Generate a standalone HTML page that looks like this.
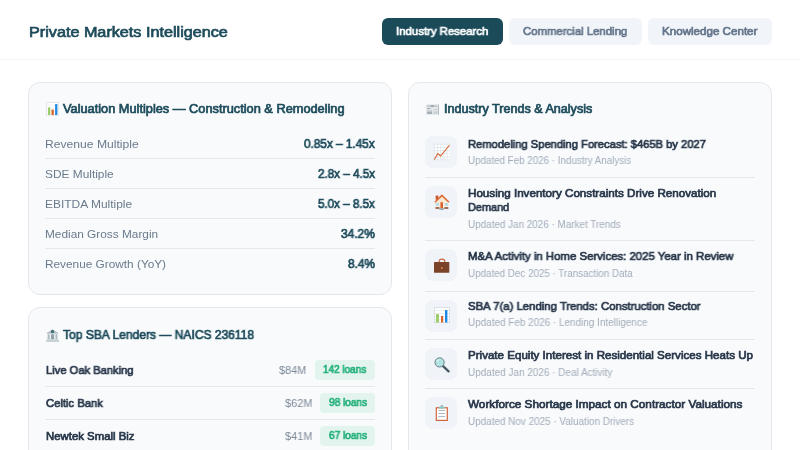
<!DOCTYPE html>
<html><head><meta charset="utf-8">
<style>
*{box-sizing:border-box;margin:0;padding:0}
html,body{width:800px;height:450px;overflow:hidden;background:#ffffff}
body{font-family:"Liberation Sans",sans-serif;position:relative}
.hdr{position:absolute;left:0;top:0;width:800px;height:60px;border-bottom:1px solid #f1f5f9;background:#fff}
.nav{position:absolute;top:18px;height:27px;border-radius:6px;background:#f1f5f9}
.nav.on{background:#1b4a59}
.card{position:absolute;background:#f8fafc;border:1px solid #e5e7eb;border-radius:12px}
.ln{position:absolute;height:1px;background:#e5e7eb}
.badge{position:absolute;height:20px;border-radius:4px;background:#e3f4ee}
.ic{position:absolute;left:425px;width:32px;height:32px;border-radius:8px;background:#f0f3f7}
.t{position:absolute;white-space:nowrap;transform-origin:0 0;will-change:transform}
svg{position:absolute;overflow:visible}
</style></head>
<body>
<div class="hdr"></div>
<div class="nav on" style="left:382px;width:121px"></div>
<div class="nav" style="left:509px;width:133px"></div>
<div class="nav" style="left:648px;width:124px"></div>
<div class="card" style="left:28px;top:82px;width:364px;height:213px"></div>
<div class="card" style="left:28px;top:307px;width:364px;height:200px"></div>
<div class="card" style="left:408px;top:82px;width:364px;height:420px"></div>
<div class="ln" style="left:45px;top:158px;width:330px"></div>
<div class="ln" style="left:45px;top:188px;width:330px"></div>
<div class="ln" style="left:45px;top:218px;width:330px"></div>
<div class="ln" style="left:45px;top:248px;width:330px"></div>
<div class="ln" style="left:45px;top:386px;width:330px"></div>
<div class="ln" style="left:45px;top:419px;width:330px"></div>
<div class="ln" style="left:425px;top:177px;width:330px"></div>
<div class="ln" style="left:425px;top:240px;width:330px"></div>
<div class="ln" style="left:425px;top:291px;width:330px"></div>
<div class="ln" style="left:425px;top:339px;width:330px"></div>
<div class="ln" style="left:425px;top:388px;width:330px"></div>
<div class="badge" style="left:315px;top:360px;width:60px"></div>
<div class="badge" style="left:320px;top:393px;width:55px"></div>
<div class="badge" style="left:320px;top:426px;width:55px"></div>
<div class="ic" style="top:136px"></div>
<div class="ic" style="top:186px"></div>
<div class="ic" style="top:249px"></div>
<div class="ic" style="top:300px"></div>
<div class="ic" style="top:348px"></div>
<div class="ic" style="top:397px"></div>
<svg style="left:46px;top:102px" width="13" height="13.5" viewBox="0 0 16 16.5"><rect x="0.5" y="0.5" width="15" height="15.5" fill="#fff" stroke="#dde3e7"/><path d="M1 4H15M1 7.5H15M1 11H15" stroke="#e6eaed" stroke-width="0.8"/><rect x="2.5" y="6.5" width="2.8" height="9.5" fill="#9ccc65"/><rect x="6.8" y="9.2" width="2.8" height="6.8" fill="#d9622f"/><rect x="11.2" y="2.5" width="2.8" height="13.5" fill="#1e88e5"/></svg>
<svg style="left:46px;top:329px" width="13" height="13" viewBox="0 0 16 16"><path d="M8 0.5L15.5 5H0.5Z" fill="#b4c1c7"/><ellipse cx="8" cy="3.6" rx="2" ry="2.6" fill="#3f6f76"/><rect x="1" y="5" width="14" height="1.3" fill="#c5d0d5"/><rect x="2" y="6.6" width="2.4" height="6" fill="#aab8be"/><rect x="6" y="6.6" width="4" height="6" fill="#8fa2aa"/><rect x="11.6" y="6.6" width="2.4" height="6" fill="#aab8be"/><rect x="1" y="12.6" width="14" height="1.4" fill="#c5d0d5"/><rect x="0" y="14" width="16" height="1.6" fill="#b4c1c7"/></svg>
<svg style="left:426px;top:103.5px" width="13" height="11" viewBox="0 0 16 13"><rect x="0" y="0" width="16" height="13" rx="0.6" fill="#e3e7ea"/><rect x="15" y="0.5" width="1" height="12.5" fill="#a9b2b9"/><rect x="1.5" y="1.5" width="12.5" height="1.6" fill="#b5bdc3"/><rect x="6" y="1.2" width="3.5" height="2.2" fill="#98a3ab"/><rect x="1.5" y="4.8" width="4" height="1.2" fill="#9aa4ac"/><rect x="9.5" y="6" width="4.5" height="1" fill="#c2c9ce"/><rect x="1.5" y="7.5" width="6" height="1" fill="#c2c9ce"/><rect x="1.5" y="9" width="6" height="3" fill="#a3adb4"/><rect x="9.5" y="8.5" width="4.5" height="3.5" fill="#c9d0d4"/></svg>
<svg style="left:434px;top:144px" width="16" height="16" viewBox="0 0 16 16"><rect x="0" y="0" width="16" height="16" fill="#fff"/><path d="M0.3 0V16M3.5 0V16M6.7 0V16M9.9 0V16M13.1 0V16M0 0.3H16M0 3.5H16M0 6.7H16M0 9.9H16M0 13.1H16M0 15.7H16" stroke="#d5dde2" stroke-width="0.6"/><path d="M0.4 15.5L3.8 9.6L6.6 12L15.6 1" stroke="#d9602f" stroke-width="1.1" fill="none"/></svg>
<svg style="left:434px;top:194px" width="16" height="16" viewBox="0 0 16 16"><path d="M1.4 8H14.3V14.5H1.4Z" fill="#fdf0df"/><path d="M1.8 5V1.8H4.2V3.5" fill="#c9582c"/><rect x="1.8" y="1.8" width="2.4" height="4" fill="#c9582c"/><path d="M0.9 8.2L7.9 1.4L15 8.2Z" fill="#fbe6cf"/><path d="M0.9 8.2L7.9 1.4L15 8.2" stroke="#dd6a36" stroke-width="1.5" fill="none" stroke-linejoin="round"/><rect x="1.7" y="9" width="3.4" height="2.8" fill="#b8dbe6"/><rect x="10.6" y="9" width="3.4" height="2.8" fill="#b8dbe6"/><rect x="6.4" y="8.2" width="2.6" height="6.3" fill="#d9622f"/><rect x="1.5" y="13.3" width="4" height="1.4" fill="#7a3a1c"/><rect x="10.3" y="13.3" width="4" height="1.4" fill="#7a3a1c"/><rect x="5.4" y="14.3" width="4.6" height="1.5" fill="#90a4ae"/></svg>
<svg style="left:434px;top:258px" width="16" height="16" viewBox="0 0 16 16"><path d="M5.2 4.2V3.6Q5.2 1.2 8 1.2Q10.8 1.2 10.8 3.6V4.2" stroke="#c8673a" stroke-width="1.2" fill="none"/><rect x="0" y="4" width="15.3" height="10.8" rx="0.6" fill="#7b4428"/><rect x="7" y="9.3" width="1.6" height="1.6" fill="#e88a5a"/></svg>
<svg style="left:434px;top:307px" width="16" height="16" viewBox="0 0 16 16"><rect x="0.4" y="0.4" width="15.2" height="15.2" fill="#fff" stroke="#d3dbe0" stroke-width="0.8"/><path d="M0.5 3.5H15.5M0.5 6.5H15.5M0.5 9.5H15.5M0.5 12.5H15.5" stroke="#e1e6e9" stroke-width="0.7"/><rect x="2" y="7" width="2.9" height="8.5" fill="#9ccc65"/><rect x="7" y="9" width="2.2" height="6.5" fill="#d9622f"/><rect x="11" y="3" width="2.4" height="12.5" fill="#1e88e5"/></svg>
<svg style="left:434px;top:356.5px" width="16" height="16" viewBox="0 0 16 16"><path d="M9.3 9.3L14.6 14.4" stroke="#455a64" stroke-width="2.3" stroke-linecap="round"/><circle cx="5.6" cy="5.4" r="4.6" fill="#b2e3e3" stroke="#5f7078" stroke-width="0.9"/><path d="M3 4.6Q3.6 2.9 5.3 2.5" stroke="#eef9f9" stroke-width="1" fill="none"/></svg>
<svg style="left:434px;top:405px" width="16" height="16" viewBox="0 0 16 16"><rect x="1.7" y="2.2" width="12.2" height="13.8" fill="#d0643a"/><rect x="2.9" y="3.4" width="9.8" height="11.4" fill="#fff"/><rect x="5" y="1.6" width="5.6" height="2" rx="0.6" fill="#80cbc4"/><rect x="6.6" y="0" width="2.4" height="1.8" rx="0.8" fill="#a2b0b8"/><path d="M4.3 5.5H11.2M4.3 8.5H11.2M4.3 11.5H11.2" stroke="#a5b2bb" stroke-width="0.9"/></svg>

<div class="t" style="left:28.90px;top:25px;font-size:14.7px;line-height:14.7px;-webkit-text-stroke:0.7px #1d4b5b;transform:scaleX(1.1023);color:#1d4b5b">Private Markets Intelligence</div>
<div class="t" style="left:396.00px;top:26px;font-size:11.5px;line-height:11.5px;-webkit-text-stroke:0.7px #ffffff;transform:scaleX(0.9894);color:#ffffff">Industry Research</div>
<div class="t" style="left:523.00px;top:26px;font-size:11.5px;line-height:11.5px;-webkit-text-stroke:0.7px #64748b;transform:scaleX(0.9886);color:#64748b">Commercial Lending</div>
<div class="t" style="left:662.40px;top:26px;font-size:11.5px;line-height:11.5px;-webkit-text-stroke:0.7px #64748b;transform:scaleX(1.0084);color:#64748b">Knowledge Center</div>
<div class="t" style="left:63.40px;top:103px;font-size:12.5px;line-height:12.5px;-webkit-text-stroke:0.7px #1d4b5b;transform:scaleX(1.0217);color:#1d4b5b">Valuation Multiples — Construction &amp; Remodeling</div>
<div class="t" style="left:44.90px;top:139px;font-size:11.5px;line-height:11.5px;transform:scaleX(1.0543);color:#6b7b8c">Revenue Multiple</div>
<div class="t" style="left:44.90px;top:169px;font-size:11.5px;line-height:11.5px;transform:scaleX(1.0339);color:#6b7b8c">SDE Multiple</div>
<div class="t" style="left:44.90px;top:199px;font-size:11.5px;line-height:11.5px;transform:scaleX(1.041);color:#6b7b8c">EBITDA Multiple</div>
<div class="t" style="left:44.90px;top:229px;font-size:11.5px;line-height:11.5px;transform:scaleX(1.0295);color:#6b7b8c">Median Gross Margin</div>
<div class="t" style="left:44.90px;top:259px;font-size:11.5px;line-height:11.5px;transform:scaleX(1.0274);color:#6b7b8c">Revenue Growth (YoY)</div>
<div class="t" style="left:303.80px;top:138px;font-size:12.3px;line-height:12.3px;-webkit-text-stroke:0.7px #1d4b5b;transform:scaleX(0.9569);color:#1d4b5b">0.85x – 1.45x</div>
<div class="t" style="left:317.80px;top:168px;font-size:12.3px;line-height:12.3px;-webkit-text-stroke:0.7px #1d4b5b;transform:scaleX(0.9468);color:#1d4b5b">2.8x – 4.5x</div>
<div class="t" style="left:317.60px;top:198px;font-size:12.3px;line-height:12.3px;-webkit-text-stroke:0.7px #1d4b5b;transform:scaleX(0.9435);color:#1d4b5b">5.0x – 8.5x</div>
<div class="t" style="left:341.00px;top:228px;font-size:12.3px;line-height:12.3px;-webkit-text-stroke:0.7px #1d4b5b;transform:scaleX(0.9714);color:#1d4b5b">34.2%</div>
<div class="t" style="left:348.00px;top:258px;font-size:12.3px;line-height:12.3px;-webkit-text-stroke:0.7px #1d4b5b;transform:scaleX(0.9643);color:#1d4b5b">8.4%</div>
<div class="t" style="left:63.10px;top:329px;font-size:12.5px;line-height:12.5px;-webkit-text-stroke:0.7px #1d4b5b;transform:scaleX(0.9627);color:#1d4b5b">Top SBA Lenders — NAICS 236118</div>
<div class="t" style="left:45.60px;top:365px;font-size:11.3px;line-height:11.3px;-webkit-text-stroke:0.7px #273649;transform:scaleX(0.9887);color:#273649">Live Oak Banking</div>
<div class="t" style="left:45.60px;top:398px;font-size:11.3px;line-height:11.3px;-webkit-text-stroke:0.7px #273649;transform:scaleX(0.9932);color:#273649">Celtic Bank</div>
<div class="t" style="left:45.60px;top:431px;font-size:11.3px;line-height:11.3px;-webkit-text-stroke:0.7px #273649;transform:scaleX(1.0069);color:#273649">Newtek Small Biz</div>
<div class="t" style="left:278.90px;top:365px;font-size:11.2px;line-height:11.2px;transform:scaleX(0.9719);color:#7d8998">$84M</div>
<div class="t" style="left:284.90px;top:398px;font-size:11.2px;line-height:11.2px;transform:scaleX(0.9787);color:#7d8998">$62M</div>
<div class="t" style="left:284.90px;top:431px;font-size:11.2px;line-height:11.2px;transform:scaleX(0.9787);color:#7d8998">$41M</div>
<div class="t" style="left:323.10px;top:364px;font-size:10.6px;line-height:10.6px;-webkit-text-stroke:0.7px #22b07a;transform:scaleX(0.9393);color:#22b07a">142 loans</div>
<div class="t" style="left:328.50px;top:397px;font-size:10.6px;line-height:10.6px;-webkit-text-stroke:0.7px #22b07a;transform:scaleX(0.9504);color:#22b07a">98 loans</div>
<div class="t" style="left:328.50px;top:430px;font-size:10.6px;line-height:10.6px;-webkit-text-stroke:0.7px #22b07a;transform:scaleX(0.9504);color:#22b07a">67 loans</div>
<div class="t" style="left:443.80px;top:103px;font-size:12.5px;line-height:12.5px;-webkit-text-stroke:0.7px #1d4b5b;transform:scaleX(1.0068);color:#1d4b5b">Industry Trends &amp; Analysis</div>
<div class="t" style="left:467.80px;top:139px;font-size:11.5px;line-height:11.5px;-webkit-text-stroke:0.7px #273649;transform:scaleX(0.9715);color:#273649">Remodeling Spending Forecast: $465B by 2027</div>
<div class="t" style="left:467.80px;top:156px;font-size:10px;line-height:10px;transform:scaleX(0.9784);color:#a3adba">Updated Feb 2026 · Industry Analysis</div>
<div class="t" style="left:467.80px;top:188px;font-size:11.5px;line-height:11.5px;-webkit-text-stroke:0.7px #273649;transform:scaleX(1.0114);color:#273649">Housing Inventory Constraints Drive Renovation</div>
<div class="t" style="left:467.80px;top:202px;font-size:11.5px;line-height:11.5px;-webkit-text-stroke:0.7px #273649;transform:scaleX(0.9492);color:#273649">Demand</div>
<div class="t" style="left:467.80px;top:220px;font-size:10px;line-height:10px;transform:scaleX(0.9883);color:#a3adba">Updated Jan 2026 · Market Trends</div>
<div class="t" style="left:467.80px;top:251px;font-size:11.5px;line-height:11.5px;-webkit-text-stroke:0.7px #273649;transform:scaleX(0.991);color:#273649">M&amp;A Activity in Home Services: 2025 Year in Review</div>
<div class="t" style="left:467.80px;top:269px;font-size:10px;line-height:10px;transform:scaleX(0.981);color:#a3adba">Updated Dec 2025 · Transaction Data</div>
<div class="t" style="left:467.80px;top:301px;font-size:11.5px;line-height:11.5px;-webkit-text-stroke:0.7px #273649;transform:scaleX(0.9857);color:#273649">SBA 7(a) Lending Trends: Construction Sector</div>
<div class="t" style="left:467.80px;top:318px;font-size:10px;line-height:10px;transform:scaleX(0.9922);color:#a3adba">Updated Feb 2026 · Lending Intelligence</div>
<div class="t" style="left:467.80px;top:350px;font-size:11.5px;line-height:11.5px;-webkit-text-stroke:0.7px #273649;transform:scaleX(1.0063);color:#273649">Private Equity Interest in Residential Services Heats Up</div>
<div class="t" style="left:467.80px;top:368px;font-size:10px;line-height:10px;transform:scaleX(0.9959);color:#a3adba">Updated Jan 2026 · Deal Activity</div>
<div class="t" style="left:467.80px;top:399px;font-size:11.5px;line-height:11.5px;-webkit-text-stroke:0.7px #273649;transform:scaleX(1.0214);color:#273649">Workforce Shortage Impact on Contractor Valuations</div>
<div class="t" style="left:467.80px;top:417px;font-size:10px;line-height:10px;transform:scaleX(0.9905);color:#a3adba">Updated Nov 2025 · Valuation Drivers</div>
</body></html>
